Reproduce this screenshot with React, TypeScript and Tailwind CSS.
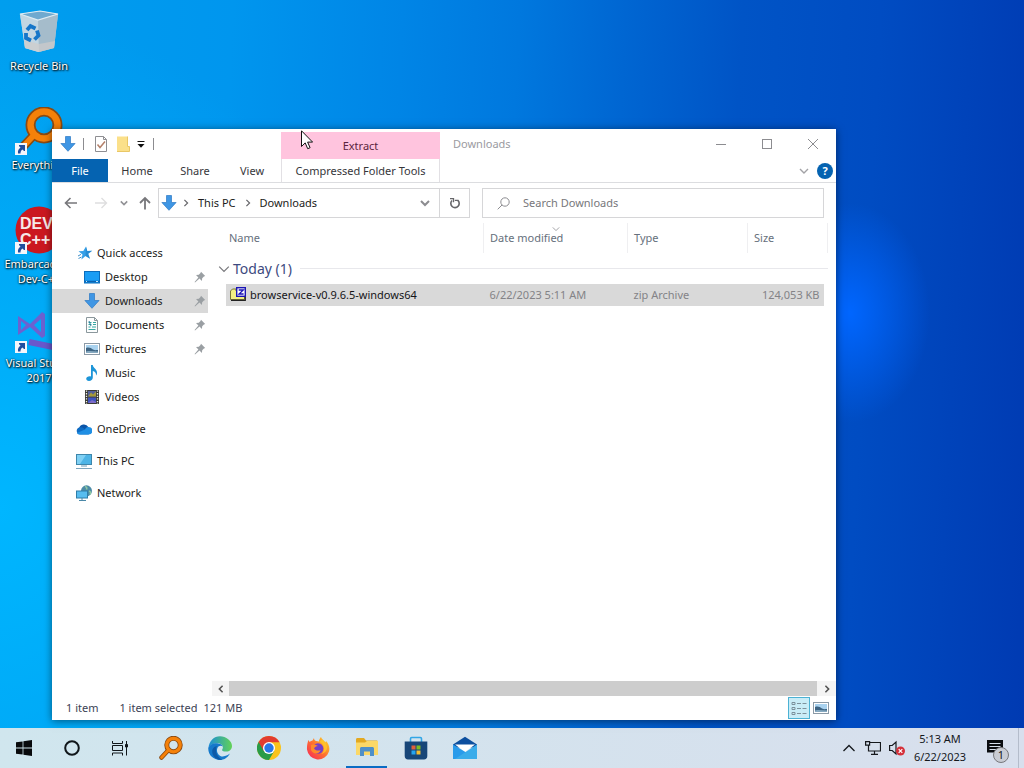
import type { ReactNode } from "react";

type IconProps = { className?: string };

function DownArrowIcon({ className = "w-4 h-4" }: IconProps) {
    return (
        <svg viewBox="0 0 16 16" className={className}>
            <path d="M5.5 .5h5v7h4.6L8 15.3.9 7.5h4.6z" fill="#3f96e4" stroke="#2b78c4" strokeWidth=".7" />
        </svg>
    );
}

function StarIcon() {
    return (
        <svg viewBox="0 0 16 16" className="w-4 h-4">
            <path d="M9 1.5l1.3 4.6 4.9-.3-4 3 1.8 5-4.5-2.7L4.4 14.5l1.100-5L1.500 6.200l4.800-.2z" fill="#35a0e8" />
            <path d="M1 11l3-1.600M1.500 13.500l3-1.500" stroke="#3e8fc9" strokeWidth="1" />
            <path d="M9 1.500l1.300 4.600 4.900-.3-4 3 1.800 5-4.500-2.700z" fill="#1878c0" opacity=".5" />
        </svg>
    );
}

function DesktopIcon() {
    return (
        <svg viewBox="0 0 16 16" className="w-4 h-4">
            <rect x=".5" y="2.500" width="15" height="11.500" fill="#1a9df5" stroke="#0b6cbc" />
            <path d="M1 12.500h14" stroke="#0b62ae" strokeWidth="1.500" />
            <path d="M2 12.500h1M12 12.500h2" stroke="#c8e8ff" />
        </svg>
    );
}

function DocumentIcon() {
    return (
        <svg viewBox="0 0 16 16" className="w-4 h-4">
            <path d="M2.500.5h8l3 3v12h-11z" fill="#fbfdfd" stroke="#8b979c" />
            <path d="M10.500.5v3h3" fill="none" stroke="#8b979c" />
            <path d="M4.500 5.500h3M9 5.500h3M4.500 7.500h3M9 7.500h3M4.500 10h2M8 10h4M4.500 12.500h7" stroke="#35a6a2" />
            <path d="M5 4l2 5" stroke="#2d7d9c" />
        </svg>
    );
}

function PictureIcon() {
    return (
        <svg viewBox="0 0 16 16" className="w-4 h-4">
            <rect x=".5" y="2.500" width="15" height="11" fill="#fff" stroke="#8c9aa6" />
            <rect x="2" y="4" width="12" height="8" fill="#a9d2ef" />
            <path d="M2 7c3-1 5 0 7 1.500 2 1 3 .5 5 .5v3H2z" fill="#3d6483" />
            <path d="M2 10.500c4-1 8 0 12 0V12H2z" fill="#86a9c0" />
        </svg>
    );
}

function MusicIcon() {
    return (
        <svg viewBox="0 0 16 16" className="w-4 h-4">
            <path d="M7 0h1.800c.3 3.300 4.700 4.200 4.200 8.500-.2 1-.6 1.700-1 2 .4-2.600-1.200-4-3.200-4.500v6.500C8.800 14.600 7 16 5 16c-1.800 0-2.800-1-2.800-2.200C2.200 12 4.500 11 7 11.500z" fill="#1d95d8" />
        </svg>
    );
}

function VideoIcon() {
    return (
        <svg viewBox="0 0 16 16" className="w-4 h-4">
            <rect x="1" y="1" width="14" height="14" fill="#3a3a36" />
            <rect x="4" y="2" width="8" height="5.500" fill="#54619c" />
            <rect x="4" y="8.500" width="8" height="5.500" fill="#3f54c0" />
            <path d="M4 7.500l3-4 2 2 3-3v5z" fill="#a79b3a" />
            <path d="M4 14l4-3 4 2v1z" fill="#7d6cc8" />
            <path d="M2.500 1.500v14M13.500 1.500v14" stroke="#f2f2ea" strokeWidth="1.300" strokeDasharray="1.300 1.300" />
        </svg>
    );
}

function OneDriveIcon() {
    return (
        <svg viewBox="0 0 16 16" className="w-4 h-4">
            <path d="M3 7.500A5 5 0 0 1 12.300 6L9 10z" fill="#0c55a8" />
            <path d="M4 13.500a3.600 3.600 0 0 1-.8-7C5 6 6.500 6.500 8 7.500L13 13.500z" fill="#0f6cc4" />
            <path d="M9 8.500c1-2.200 2.600-2.700 3.700-2.400A3.700 3.700 0 0 1 12.600 13.500H4c-1.500 0-2.500-.6-3-1.600z" fill="#1f8fe4" />
        </svg>
    );
}

function ComputerIcon() {
    return (
        <svg viewBox="0 0 16 16" className="w-4 h-4">
            <rect x=".5" y="1.500" width="15" height="10" fill="#4db4e6" stroke="#3e86ab" />
            <path d="M1 2h9L4 11H1z" fill="#7fd0f4" />
            <path d="M5 13h6" stroke="#6f9db5" />
            <path d="M0 15.500h16" stroke="#7da5bd" />
        </svg>
    );
}

function NetworkIcon() {
    return (
        <svg viewBox="0 0 16 16" className="w-4 h-4">
            <circle cx="10.500" cy="5.800" r="5.500" fill="#4c8ba6" />
            <path d="M9 1.500c2 .5 2 1.500 1.500 3M13 6c1.500.5 2 1.500 1 3.500" fill="none" stroke="#8fc9a4" strokeWidth="1.600" />
            <rect x=".5" y="6" width="11" height="7" fill="#57bdf0" stroke="#2f7da8" />
            <path d="M6 13v2.500M3 15.500h7" stroke="#4a88a8" />
        </svg>
    );
}

function PinIcon() {
    return (
        <svg viewBox="0 0 12 12" className="w-3 h-3">
            <path d="M7 .8L11.200 5l-1.300.5-1.700 1.700-.3 2.800L5.500 7.600 1 11.500.6 11l3.800-4.600L2 4l2.800-.2L6.500 2z" fill="#9a9fa3" />
        </svg>
    );
}

function ZipIcon() {
    return (
        <svg viewBox="0 0 16 16" className="w-4 h-4">
            <path d="M.5 4l2-2H6v2h8.500v8.500H.5z" fill="#f1ee84" stroke="#77763a" />
            <path d="M1 13.300h14.300V9" fill="none" stroke="#222" strokeWidth="1.200" />
            <rect x="6.700" y=".700" width="8.600" height="8.600" fill="#fff" stroke="#1a14b4" strokeWidth="1.400" />
            <path d="M8.700 3h4.600L9 7h4.600" fill="none" stroke="#1a14b4" strokeWidth="1.300" />
        </svg>
    );
}

function Chevron({ className = "" }: IconProps) {
    return (
        <svg viewBox="0 0 10 10" className={className} fill="none" stroke="currentColor">
            <path d="M1 3l4 4 4-4" />
        </svg>
    );
}

function EverythingIcon({ className = "" }: IconProps) {
    return (
        <svg viewBox="0 0 48 48" className={className}>
            <path d="M19 28L5 43" stroke="#8a4a12" strokeWidth="9" strokeLinecap="round" />
            <circle cx="29" cy="18" r="13.500" fill="none" stroke="#8a4a12" strokeWidth="10" />
            <path d="M19 28L5 43" stroke="#f58109" strokeWidth="5.500" strokeLinecap="round" />
            <circle cx="29" cy="18" r="13.500" fill="none" stroke="#f58109" strokeWidth="6.500" />
        </svg>
    );
}

function RecycleBinIcon() {
    return (
        <svg viewBox="0 0 48 48" className="w-12 h-12">
            <path d="M5 6l5 34 13 4 16-4 4-34-17-3z" fill="#b7d0df" />
            <path d="M5 6l18 6 1 32-14-4z" fill="#c3d6e2" />
            <path d="M23 12l20-6-4 34-15 4z" fill="#a5bccb" />
            <path d="M5 6l20-3 18 3-20 6z" fill="#6fa9cf" stroke="#dfecf3" strokeWidth="1.200" />
            <path d="M9 32l15 4 16-3-1 7-15 4-14-4z" fill="#d0cccb" opacity=".7" />
            <g fill="none" stroke="#1676c9" strokeWidth="3.800">
                <path d="M12 22l3.500-4 5 2.500" />
                <path d="M22 22.500l1.500 5-4 4" />
                <path d="M16 32.500l-5-2.500 0-5" />
            </g>
        </svg>
    );
}

function DevCppIcon() {
    return (
        <svg viewBox="0 0 48 48" className="w-12 h-12">
            <circle cx="24" cy="24" r="23.500" fill="#cb1820" />
            <text x="5" y="23" fontSize="16" fontWeight="700" fill="#f6e9e9" fontFamily="Liberation Sans, sans-serif">DEV</text>
            <text x="5" y="39" fontSize="16" fontWeight="700" fill="#f6e9e9" fontFamily="Liberation Sans, sans-serif">C++</text>
        </svg>
    );
}

function VisualStudioIcon() {
    return (
        <svg viewBox="0 0 48 48" className="w-12 h-12">
            <path d="M3 11l12 8L27 7l3 2v22l-3 2-12-11-12 8zM6 16v9l5-5zM26 14l-7 6 7 7z" fill="#6c62d0" fillRule="evenodd" />
            <path d="M14 37l24 5 10-8" stroke="#6a58cc" strokeWidth="6" fill="none" />
        </svg>
    );
}

function ShortcutBadge() {
    return (
        <svg viewBox="0 0 12 12" className="absolute left-0 bottom-0 w-3 h-3">
            <path d="M0 0h12v12H0z" fill="#f4f6fb" />
            <path d="M3 10.500C2.500 7 4 5.500 5.500 4.700L4 3V2h6v6H9L7.500 6.500C6 7.500 5.500 8.500 5.500 10.500z" fill="#214f9f" />
        </svg>
    );
}

function EdgeIcon() {
    return (
        <svg viewBox="0 0 24 24" className="w-6 h-6">
            <defs>
                <linearGradient id="edgeTop" x1="0" x2="1">
                    <stop offset="0" stopColor="#1b8ed8" />
                    <stop offset="1" stopColor="#62d256" />
                </linearGradient>
            </defs>
            <path d="M.5 12C1 5 6 .3 12 .3S24 5 24 10c0 3.500-2.600 5.600-5.600 5.600-2.700 0-4.300-.8-4.300-1.700 0-.6.8-1 .8-2.600 0-2.300-2.300-4-5.500-4C5 7.300 2 9 .5 12z" fill="url(#edgeTop)" />
            <path d="M.3 12C1.500 8.700 5.300 7 9.200 7.300c3 .3 5 1.500 5.500 3.200-1.500-1.300-5.200-.7-5.700 3-.4 3.700 2.800 8.300 8 6.500 2.200-.6 3.500-1.500 5-2.500C19.500 22 15.500 24 12 24 5.500 24-.2 19 .3 12z" fill="#1579cb" />
            <path d="M9 10c-2.500 4-.5 11 5.500 13.700C7 25 3 18 4.500 13.500 5.300 11.500 7 10.300 9 10z" fill="#0d5aa7" />
        </svg>
    );
}

function ChromeIcon() {
    return (
        <svg viewBox="0 0 24 24" className="w-6 h-6">
            <circle cx="12" cy="12" r="12" fill="#f9c31b" />
            <path d="M12 12L1.600 6A12 12 0 0 0 12 24l5.200-9z" fill="#299b48" />
            <path d="M12 12V6.200h10.500A12 12 0 0 0 1.600 6l5.200 9z" fill="#e23c30" />
            <circle cx="12" cy="12" r="6" fill="#fff" />
            <circle cx="12" cy="12" r="4.700" fill="#2877e8" />
        </svg>
    );
}

function FirefoxIcon() {
    return (
        <svg viewBox="0 0 24 24" className="w-6 h-6">
            <defs>
                <linearGradient id="foxBody" x1="1" y1="0" x2="0" y2="1">
                    <stop offset="0" stopColor="#ffe226" />
                    <stop offset=".5" stopColor="#ff7130" />
                    <stop offset="1" stopColor="#f5225c" />
                </linearGradient>
            </defs>
            <path d="M2.500 4c.6.500.8 1.200 1 2 1-1 2.200-1.500 3-1.600L8 2c0 1.500.5 2.300 2 3l3 .5C13 3.500 14 2 15 1c.6 2.300 3 3.500 4.500 5.500L20 5c3 3 4 7 3 10.500A11.300 11.300 0 0 1 1 13.500C.8 10 1.500 6.500 2.500 4z" fill="url(#foxBody)" />
            <circle cx="12" cy="12.500" r="5.300" fill="#7540c8" />
            <path d="M5 9c2.500-1 5-.3 7 1-2 .3-3 1.200-4 2.200 1 2 4 3 6.500 1.800C14 18 7 19 5 14z" fill="#ff8a2a" />
            <path d="M13 5.500c3 1.500 5.500 4.500 5 8-.4 2-1.500 3.500-3 4.500 4-.5 6.500-4 6-7.500-.5-3-3-5-4.500-7z" fill="#ffc928" opacity=".8" />
        </svg>
    );
}

function ExplorerIcon() {
    return (
        <svg viewBox="0 0 24 24" className="w-6 h-6">
            <path d="M1 3.500C1 2.700 1.500 2 2.500 2H9l2 2.500h10.500c.8 0 1.500.6 1.500 1.500v13H1z" fill="#e3a921" />
            <path d="M1 6.500h9l2-1.500h11v14H1z" fill="#fbd867" />
            <path d="M5 20v-7.500c0-.8.700-1.500 1.500-1.500h11c.8 0 1.500.700 1.500 1.500V20h-4v-4.500H9V20z" fill="#4f90c8" />
        </svg>
    );
}

function StoreIcon() {
    return (
        <svg viewBox="0 0 24 24" className="w-6 h-6">
            <path d="M6.500 6V2.700c0-.7.500-1.200 1.200-1.200h8.600c.7 0 1.200.5 1.200 1.200V6" fill="none" stroke="#32a6e6" strokeWidth="1.600" />
            <path d="M.7 5.500h22.600V20c0 2-1.300 3.500-3.300 3.500H4c-2 0-3.300-1.500-3.300-3.500z" fill="#174678" />
            <path d="M7.500 9.500h4v4h-4z" fill="#e0603a" />
            <path d="M12.500 9.500h4v4h-4z" fill="#80bc20" />
            <path d="M7.500 14.500h4v4h-4z" fill="#25a4ef" />
            <path d="M12.500 14.500h4v4h-4z" fill="#f3bd30" />
        </svg>
    );
}

function MailIcon() {
    return (
        <svg viewBox="0 0 24 24" className="w-6 h-6">
            <path d="M0 8.500L12 .8l12 7.700v3H0z" fill="#0c4f9f" />
            <path d="M2 8.500h20L12 16z" fill="#fff" />
            <path d="M0 8.500L14 17l-7 6H0z" fill="#2a9bea" />
            <path d="M24 8.500L2 23h22z" fill="#3aacea" />
        </svg>
    );
}

const desktopItems: { label: string; icon: ReactNode; shortcut: boolean }[] = [
    { label: "Recycle Bin", icon: <RecycleBinIcon />, shortcut: false },
    { label: "Everything", icon: <EverythingIcon className="w-12 h-12" />, shortcut: true },
    { label: "Embarcadero Dev-C++", icon: <DevCppIcon />, shortcut: true },
    { label: "Visual Studio 2017", icon: <VisualStudioIcon />, shortcut: true },
];

const quickAccess: { label: string; icon: ReactNode; pinned: boolean; active?: boolean }[] = [
    { label: "Desktop", icon: <DesktopIcon />, pinned: true },
    { label: "Downloads", icon: <DownArrowIcon />, pinned: true, active: true },
    { label: "Documents", icon: <DocumentIcon />, pinned: true },
    { label: "Pictures", icon: <PictureIcon />, pinned: true },
    { label: "Music", icon: <MusicIcon />, pinned: false },
    { label: "Videos", icon: <VideoIcon />, pinned: false },
];

const places = [
    { label: "OneDrive", icon: <OneDriveIcon /> },
    { label: "This PC", icon: <ComputerIcon /> },
    { label: "Network", icon: <NetworkIcon /> },
];

const taskbarApps: { label: string; icon: ReactNode; active?: boolean }[] = [
    { label: "Everything", icon: <EverythingIcon className="w-6 h-6" /> },
    { label: "Microsoft Edge", icon: <EdgeIcon /> },
    { label: "Google Chrome", icon: <ChromeIcon /> },
    { label: "Firefox", icon: <FirefoxIcon /> },
    { label: "File Explorer", icon: <ExplorerIcon />, active: true },
    { label: "Microsoft Store", icon: <StoreIcon /> },
    { label: "Mail", icon: <MailIcon /> },
];

function Ribbon() {
    return (
        <header className="flex h-[54px] shrink-0 border-b border-[#dcdde0]">
            <div className="flex flex-col w-[229px] shrink-0">
                <div className="flex items-center h-[30px] pl-2 text-[#77777b]">
                    <DownArrowIcon />
                    <span className="w-px h-3 ml-[7px] bg-[#8c8c90]" />
                    <button aria-label="Properties" className="ml-[9px]">
                        <svg viewBox="0 0 16 16" className="w-4 h-4">
                            <path d="M2.500.5h8l3 3v12h-11z" fill="#fff" stroke="#8e8e92" />
                            <path d="M10.500.5v3h3" fill="none" stroke="#8e8e92" />
                            <path d="M4.500 8.500l2.500 3 5-6" fill="none" stroke="#b4806a" strokeWidth="1.500" />
                        </svg>
                    </button>
                    <button aria-label="New folder" className="ml-[6px]">
                        <svg viewBox="0 0 16 16" className="w-4 h-4">
                            <path d="M2 .5h10.500v10H14.500v5H2z" fill="#fbe08a" />
                            <path d="M12.500.5v10h2v5H2" fill="none" stroke="#e9c766" />
                        </svg>
                    </button>
                    <button aria-label="Customize Quick Access Toolbar" className="ml-[5px]">
                        <svg viewBox="0 0 10 10" className="w-[10px] h-[10px]">
                            <path d="M1.500 2.500h7" stroke="#111" />
                            <path d="M1.500 5h7L5 8.800z" fill="#111" />
                        </svg>
                    </button>
                    <span className="w-px h-3 ml-[7px] bg-[#8c8c90]" />
                </div>
                <nav className="flex flex-1 text-center text-[#36363a]">
                    <button className="w-14 bg-[#0563b1] text-white">File</button>
                    <button className="w-[58px]">Home</button>
                    <button className="w-[58px]">Share</button>
                    <button className="w-14">View</button>
                </nav>
            </div>
            <div className="flex flex-col w-[159px] shrink-0 pt-[3px] text-[#36363a]">
                <div className="h-[27px] flex items-center justify-center bg-[#ffc4de] text-[#5c2440]">Extract</div>
                <button className="flex-1 border-x border-[#e2e0e4] whitespace-nowrap">Compressed Folder Tools</button>
            </div>
            <div className="flex flex-col flex-1 min-w-0">
                <div className="flex items-center h-[30px] text-[#8c8c90]">
                    <h1 className="flex-1 pl-[13px] text-[#9b9b9f]">Downloads</h1>
                    <button aria-label="Minimize" className="w-[46px] h-full flex items-center justify-center">
                        <svg viewBox="0 0 12 12" className="w-3 h-3"><path d="M1 6.500h10" stroke="currentColor" /></svg>
                    </button>
                    <button aria-label="Maximize" className="w-[46px] h-full flex items-center justify-center">
                        <svg viewBox="0 0 12 12" className="w-3 h-3"><rect x="1.500" y="1.500" width="9" height="9" fill="none" stroke="currentColor" /></svg>
                    </button>
                    <button aria-label="Close" className="w-[46px] h-full flex items-center justify-center">
                        <svg viewBox="0 0 12 12" className="w-3 h-3"><path d="M1 1l10 10M11 1L1 11" stroke="currentColor" /></svg>
                    </button>
                </div>
                <div className="flex items-center justify-end flex-1 gap-2 pr-[3px]">
                    <button aria-label="Collapse ribbon"><Chevron className="w-[10px] h-[10px] text-[#a2a2a6] stroke-[1.400]" /></button>
                    <button aria-label="Help" className="w-4 h-4 rounded-full bg-[#0563b1] text-white font-bold">?</button>
                </div>
            </div>
        </header>
    );
}

function AddressRow() {
    return (
        <div className="flex items-center h-10 shrink-0 pr-3">
            <div className="flex items-center w-[106px] shrink-0 pl-3 text-[#77777b]">
                <button aria-label="Back">
                    <svg viewBox="0 0 14 14" className="w-[14px] h-[14px]" fill="none" stroke="currentColor" strokeWidth="1.600">
                        <path d="M13 7H1.500M6.500 2l-5 5 5 5" />
                    </svg>
                </button>
                <button aria-label="Forward" className="ml-4 text-[#dededf]">
                    <svg viewBox="0 0 14 14" className="w-[14px] h-[14px]" fill="none" stroke="currentColor" strokeWidth="1.400">
                        <path d="M1 7h11.500M7.500 2l5 5-5 5" />
                    </svg>
                </button>
                <button aria-label="Recent locations" className="ml-3 text-[#929296]">
                    <Chevron className="w-2 h-2 stroke-2" />
                </button>
                <button aria-label="Up" className="ml-[10px]">
                    <svg viewBox="0 0 14 14" className="w-[14px] h-[14px]" fill="none" stroke="currentColor" strokeWidth="1.800">
                        <path d="M7 13.500V2M2 7l5-5 5 5" />
                    </svg>
                </button>
            </div>
            <div className="flex flex-1 min-w-0 h-[30px] border border-[#d6d6d8] text-[#1c1c20]">
                <div className="flex flex-1 items-center pl-[2px] pr-[9px]">
                    <DownArrowIcon />
                    <Chevron className="w-2 h-2 ml-[5px] -rotate-90 text-[#66666a] stroke-[1.500]" />
                    <a href="#this-pc" className="ml-2">This PC</a>
                    <Chevron className="w-2 h-2 ml-2 -rotate-90 text-[#66666a] stroke-[1.500]" />
                    <a href="#downloads" className="ml-2">Downloads</a>
                    <button aria-label="Previous locations" className="ml-auto">
                        <Chevron className="w-[10px] h-[10px] text-[#8c8c90] stroke-2" />
                    </button>
                </div>
                <button aria-label="Refresh" className="w-[30px] flex items-center justify-center border-l border-[#d6d6d8] text-[#66666a]">
                    <svg viewBox="0 0 12 12" className="w-3 h-3" fill="none" stroke="currentColor" strokeWidth="1.600">
                        <path d="M3 3.500A4.200 4.200 0 1 0 8.800 3.300" />
                        <path d="M1 1.700h3.500v3.500M5.800 3.300h3.600" strokeWidth="1.300" />
                    </svg>
                </button>
            </div>
            <label className="flex items-center w-[342px] h-[30px] ml-3 pl-[14px] border border-[#d6d6d8]">
                <svg viewBox="0 0 13 13" className="w-[13px] h-[13px] shrink-0" fill="none" stroke="#8c8c90">
                    <circle cx="8" cy="5" r="4.200" />
                    <path d="M5 8L.7 12.300" />
                </svg>
                <input aria-label="Search Downloads" placeholder="Search Downloads" className="flex-1 min-w-0 ml-[13px] outline-none placeholder:text-[#77777b]" />
            </label>
        </div>
    );
}

function NavigationPane() {
    return (
        <nav className="w-[156px] shrink-0 pt-[18px] text-[#1c1c20]">
            <a href="#quick-access" className="flex items-center h-6 gap-1 pl-[25px]">
                <StarIcon />
                Quick access
            </a>
            {quickAccess.map((item) => (
                <a
                    key={item.label}
                    href={`#${item.label.toLowerCase()}`}
                    className={`flex items-center h-6 gap-[5px] pl-8 pr-[2px] ${item.active ? "bg-[#d9d9d9]" : ""}`}
                >
                    {item.icon}
                    <span className="flex-1">{item.label}</span>
                    {item.pinned && <PinIcon />}
                </a>
            ))}
            {places.map((item) => (
                <a key={item.label} href={`#${item.label.toLowerCase()}`} className="flex items-center h-6 mt-2 gap-[5px] pl-6">
                    {item.icon}
                    {item.label}
                </a>
            ))}
        </nav>
    );
}

function FileList() {
    return (
        <main className="flex flex-col flex-1 min-w-0 ml-1">
            <div className="flex-1 pl-[14px] pr-2">
                <table className="w-full table-fixed border-collapse text-left">
                    <colgroup>
                        <col />
                        <col className="w-36" />
                        <col className="w-[120px]" />
                        <col className="w-[76px]" />
                        <col className="w-1" />
                    </colgroup>
                    <thead>
                        <tr className="h-[30px] text-[#66707c]">
                            <th className="pl-[3px] font-normal">Name</th>
                            <th className="relative pl-[6px] border-l border-[#efeff1] font-normal">
                                Date modified
                                <Chevron className="absolute top-[2px] left-[68px] w-2 h-2 text-[#8c8c90]" />
                            </th>
                            <th className="pl-[6px] border-l border-[#efeff1] font-normal">Type</th>
                            <th className="pl-[6px] border-l border-[#efeff1] font-normal">Size</th>
                            <td className="border-r border-[#efeff1]" />
                        </tr>
                    </thead>
                    <tbody>
                        <tr className="h-[31px]">
                            <th colSpan={5} className="font-normal">
                                <button className="flex items-center w-full -ml-2 text-[14px] text-[#3d4a80]">
                                    <Chevron className="w-3 h-3 mr-[3px] text-[#77777b]" />
                                    Today (1)
                                    <span className="flex-1 h-px ml-2 -mr-2 bg-[#e8e8ec]" />
                                </button>
                            </th>
                        </tr>
                        <tr className="h-[22px] text-[#838387]">
                            <td className="pl-1 bg-[#d9d9d9] text-[#151518]">
                                <span className="flex items-center gap-1 whitespace-nowrap">
                                    <ZipIcon />
                                    browservice-v0.9.6.5-windows64
                                </span>
                            </td>
                            <td className="pl-[6px] bg-[#d9d9d9]">6/22/2023 5:11 AM</td>
                            <td className="pl-[6px] bg-[#d9d9d9]">zip Archive</td>
                            <td className="pr-1 bg-[#d9d9d9] text-right whitespace-nowrap">124,053 KB</td>
                            <td />
                        </tr>
                    </tbody>
                </table>
            </div>
            <div className="flex h-[15px] shrink-0 bg-[#f4f4f4] text-[#555]">
                <button aria-label="Scroll left" className="w-[17px] flex items-center justify-center">
                    <Chevron className="w-2 h-2 rotate-90 stroke-2" />
                </button>
                <div className="flex-1 bg-[#cdcdcd]" />
                <button aria-label="Scroll right" className="w-[19px] flex items-center justify-center">
                    <Chevron className="w-2 h-2 -rotate-90 stroke-2" />
                </button>
            </div>
        </main>
    );
}

function ExplorerWindow() {
    return (
        <section className="absolute left-[52px] right-[188px] top-[129px] bottom-2 flex flex-col bg-white shadow-[0_1px_8px_rgba(0,0,0,0.5)]">
            <Ribbon />
            <AddressRow />
            <div className="flex flex-1 min-h-0">
                <NavigationPane />
                <FileList />
            </div>
            <footer className="flex items-center h-6 shrink-0 pl-[14px] pr-2 text-[#3c4255]">
                <span>1 item</span>
                <span className="ml-[21px]">1 item selected</span>
                <span className="ml-[6px]">121 MB</span>
                <button aria-label="Details view" className="flex items-center justify-center w-[22px] h-[22px] ml-auto border border-[#4cb2d4] bg-[#c9ecf7]">
                    <svg viewBox="0 0 16 16" className="w-4 h-4" fill="none" stroke="#7d919c">
                        <path d="M1 2.500h3v2H1zM1 7.500h3v2H1zM1 12.500h3v2H1z" />
                        <path d="M6 3.500h4M11.500 3.500h4M6 8.500h4M11.500 8.500h4M6 13.500h4M11.500 13.500h4" />
                    </svg>
                </button>
                <button aria-label="Large icons view" className="ml-[3px] -mr-px"><PictureIcon /></button>
            </footer>
        </section>
    );
}

function Taskbar() {
    return (
        <footer className="flex h-10 shrink-0 bg-linear-to-r from-[#d0e6ee] to-[#d8dfed] text-[#15181c]">
            <button aria-label="Start" className="w-12 flex items-center justify-center">
                <svg viewBox="0 0 16 16" className="w-4 h-4" fill="#080a0c">
                    <path d="M0 2.300L6.600 1.400v6.200H0zM7.400 1.300L16 0v7.600H7.400zM0 8.400h6.600v6.200L0 13.700zM7.400 8.400H16V16l-8.600-1.300z" />
                </svg>
            </button>
            <button aria-label="Search" className="w-12 flex items-center justify-center">
                <svg viewBox="0 0 16 16" className="w-4 h-4"><circle cx="8" cy="8" r="6.800" fill="none" stroke="#10161a" strokeWidth="2" /></svg>
            </button>
            <button aria-label="Task View" className="w-12 flex items-center justify-center">
                <svg viewBox="0 0 16 16" className="w-4 h-4" fill="none" stroke="#10161a">
                    <path d="M.5 1v2.500h10V1M.5 15.500V13h10v2.500M.5 5.500h10v5H.5zM14.500 1v14.500" />
                    <path d="M13.500 4.500h2v2.500h-2z" fill="#10161a" />
                </svg>
            </button>
            <div className="flex ml-[2px]">
                {taskbarApps.map((app) => (
                    <button key={app.label} aria-label={app.label} className="relative w-[49px] flex items-center justify-center">
                        {app.icon}
                        {app.active && <span className="absolute bottom-0 inset-x-1 h-[2px] bg-[#0a6cc4]" />}
                    </button>
                ))}
            </div>
            <div className="flex items-center ml-auto">
                <button aria-label="Show hidden icons" className="w-6 flex justify-center">
                    <svg viewBox="0 0 14 14" className="w-[14px] h-[14px]" fill="none" stroke="currentColor" strokeWidth="1.300">
                        <path d="M1.500 10L7 4.500l5.500 5.500" />
                    </svg>
                </button>
                <button aria-label="Network" className="w-6 flex justify-center">
                    <svg viewBox="0 0 16 16" className="w-4 h-4" fill="none" stroke="currentColor" strokeWidth="1.200">
                        <path d="M5 2.500h10.500v8.500H3.500V5M9.500 11v3M6 14.300h7" />
                        <path d="M.6 1.600h4v3.600h-4z" />
                    </svg>
                </button>
                <button aria-label="Volume" className="w-6 flex justify-center">
                    <svg viewBox="0 0 16 16" className="w-4 h-4">
                        <path d="M.6 5.500h2.600L7 2v12l-3.800-3.500H.6z" fill="none" stroke="currentColor" strokeWidth="1.200" />
                        <circle cx="11.500" cy="11" r="4.500" fill="#d5303a" />
                        <path d="M9.700 9.200l3.600 3.600M13.300 9.200l-3.600 3.600" stroke="#fff" strokeWidth="1.200" />
                    </svg>
                </button>
                <button className="w-[62px] leading-[18px] text-center">
                    <span className="block">5:13 AM</span>
                    <span className="block">6/22/2023</span>
                </button>
                <button aria-label="Notifications" className="relative w-[47px] h-full flex items-center justify-center">
                    <svg viewBox="0 0 18 18" className="w-[18px] h-[18px]">
                        <path d="M1 1h16v12.500h-3.500V17l-3.500-3.500H1z" fill="#0a0c10" />
                        <path d="M3.500 4.500h11M3.500 7.500h11M3.500 10.500h7" stroke="#d6deec" strokeWidth="1.100" />
                    </svg>
                    <span className="absolute right-[9px] bottom-[5px] w-4 h-4 rounded-full border border-[#77777b] bg-[#c9ccd4] leading-[14px] text-center">1</span>
                </button>
                <button aria-label="Show desktop" className="w-[6px] h-full border-l border-[#b4bccb]" />
            </div>
        </footer>
    );
}

export default function App() {
    return (
        <div className="flex flex-col h-screen overflow-hidden font-['Noto_Sans',sans-serif] text-[11px] leading-4">
            <div className="relative flex-1 min-h-0 bg-[radial-gradient(ellipse_80px_110px_at_83%_43%,#0066ff_0%,#0066ff00_100%),radial-gradient(ellipse_400px_500px_at_0%_70%,#00b6ff_0%,#00b6ff00_100%),linear-gradient(93deg,#009eee_0%,#0096ee_22%,#0085e6_38%,#0078de_49%,#0066d2_59%,#0054c6_70%,#004cc2_83%,#003ab2_100%)]">
                <ul className="w-[78px] pt-2 text-center text-white">
                    {desktopItems.map((item) => (
                        <li key={item.label} className="h-[99px]">
                            <a href={`#${item.label.replace(/ /g, "-").toLowerCase()}`} className="flex flex-col items-center gap-[2px]">
                                <span className="relative">
                                    {item.icon}
                                    {item.shortcut && <ShortcutBadge />}
                                </span>
                                <span className="leading-[15px] [text-shadow:1px_1px_2px_#000,0_0_2px_#000]">{item.label}</span>
                            </a>
                        </li>
                    ))}
                </ul>
                <ExplorerWindow />
                <svg viewBox="0 0 12 20" className="absolute left-[301px] top-[130px] w-3 h-5">
                    <path d="M.5.8v15.700l3.700-3.600 2.500 5.800 2.400-1-2.500-5.600h5z" fill="#fff" stroke="#111" />
                </svg>
            </div>
            <Taskbar />
        </div>
    );
}
